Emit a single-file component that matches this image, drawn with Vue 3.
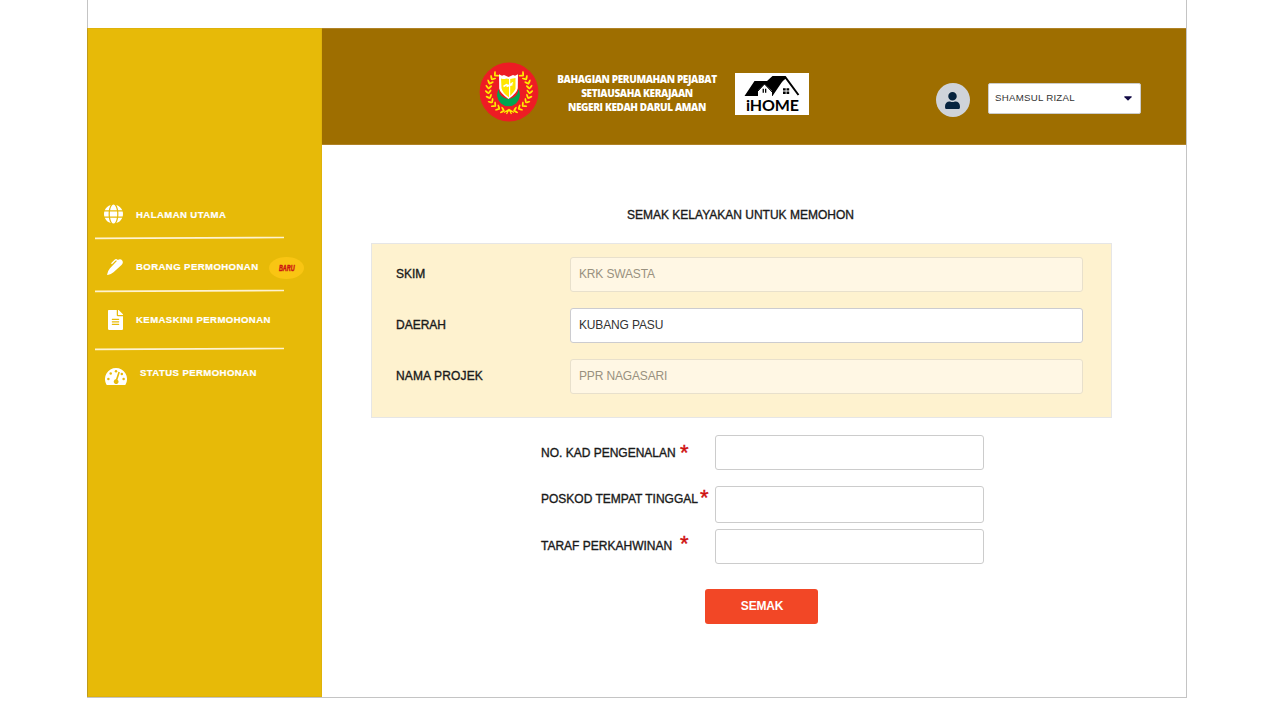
<script setup>
// Laurel leaves grow in pairs along an arc on each side of the state emblem
const leaves = []
for (let i = 0; i < 10; i++) {
  const a = (14 + i * 13.6) * Math.PI / 180
  for (const side of [-1, 1]) {
    const dir = Math.atan2(-Math.sin(a), side * Math.cos(a))
    for (const tilt of [-0.75, 0.75]) {
      leaves.push({
        x: 30 + side * 20.6 * Math.sin(a) + 2 * Math.cos(dir + tilt),
        y: 28.6 + 20.6 * Math.cos(a) + 2 * Math.sin(dir + tilt),
        r: (dir + tilt) * 180 / Math.PI,
      })
    }
  }
}
</script>

<template>
  <div class="page">
    <div class="shell">
      <aside class="sidebar">
        <a class="item i1">
          <svg class="ic-globe" viewBox="0 0 496 512"><path d="M336.5 160C322 70.7 287.8 8 248 8s-74 62.7-88.5 152h177zM152 256c0 22.2 1.2 43.5 3.3 64h185.3c2.1-20.5 3.3-41.8 3.3-64s-1.2-43.5-3.3-64H155.3c-2.1 20.5-3.3 41.8-3.3 64zm324.7-96c-28.6-67.9-86.5-120.4-158-141.6 24.4 33.8 41.2 84.7 50 141.6h108zM177.2 18.4C105.8 39.6 47.8 92.1 19.3 160h108c8.7-56.9 25.5-107.8 49.9-141.6zM487.4 192H372.7c2.1 21 3.3 42.5 3.3 64s-1.2 43-3.3 64h114.6c5.5-20.5 8.6-41.8 8.6-64s-3.1-43.5-8.5-64zM120 256c0-21.5 1.2-43 3.3-64H8.6C3.2 212.5 0 233.8 0 256s3.2 43.5 8.6 64h114.6c-2-21-3.2-42.5-3.2-64zm39.5 96c14.5 89.3 48.7 152 88.5 152s74-62.7 88.5-152h-177zm159.3 141.6c71.4-21.2 129.4-73.7 158-141.6h-108c-8.8 56.9-25.6 107.8-50 141.6zM19.3 352c28.6 67.9 86.5 120.4 158 141.6-24.4-33.8-41.2-84.7-50-141.6h-108z"/></svg>
          <span>HALAMAN UTAMA</span>
        </a>
        <svg class="rule" viewBox="0 0 189 4"><path d="M0 2.4 189 1.5"/></svg>
        <a class="item i2">
          <svg class="ic-pen" viewBox="0 0 16 16">
            <path d="M10.600 1.300Q12.300-.300 14.200.500 16.300 1.800 15.700 4 15.500 5 14.500 6L6.500 13.300Q4 15.500.700 16 .100 16 .200 15.300.800 11.800 3 9.300Z"/>
            <path class="clip" d="M4.500 4.700 8 1.200Q9 .300 10.200 1.300L11.500 2.500"/>
          </svg>
          <span>BORANG PERMOHONAN</span>
          <span class="badge"><b>BARU</b></span>
        </a>
        <svg class="rule" viewBox="0 0 189 4"><path d="M0 2.4 189 1.5"/></svg>
        <a class="item i3">
          <svg class="ic-file" viewBox="0 0 384 512" preserveAspectRatio="none"><path d="M224 136V0H24C10.7 0 0 10.7 0 24v464c0 13.3 10.7 24 24 24h336c13.3 0 24-10.7 24-24V160H248c-13.2 0-24-10.800-24-24zm64 236c0 6.600-5.400 12-12 12H108c-6.600 0-12-5.400-12-12v-8c0-6.600 5.400-12 12-12h168c6.600 0 12 5.400 12 12v8zm0-64c0 6.600-5.400 12-12 12H108c-6.600 0-12-5.400-12-12v-8c0-6.600 5.400-12 12-12h168c6.600 0 12 5.400 12 12v8zm0-72v8c0 6.600-5.400 12-12 12H108c-6.600 0-12-5.400-12-12v-8c0-6.600 5.400-12 12-12h168c6.600 0 12 5.400 12 12zm96-114.100v6.100H256V0h6.100c6.400 0 12.500 2.500 17 7l97.900 98c4.500 4.500 7 10.600 7 16.900z"/></svg>
          <span>KEMASKINI PERMOHONAN</span>
        </a>
        <svg class="rule" viewBox="0 0 189 4"><path d="M0 2.4 189 1.5"/></svg>
        <a class="item i4">
          <svg class="ic-dash" viewBox="0 0 22 17">
            <path d="M11 0A11 11 0 0 1 20.6 16.400Q20.200 17 19.500 17H2.500Q1.800 17 1.400 16.400A11 11 0 0 1 11 0Z"/>
            <g class="cut"><circle cx="3.400" cy="11" r="1.250"/><circle cx="5.700" cy="5.600" r="1.250"/><circle cx="11" cy="3.200" r="1.250"/><circle cx="16.800" cy="6" r="1.250"/><circle cx="18.600" cy="11" r="1.250"/><path d="M13.400 3.800l1.500.5-2.400 7.400a2.400 2.400 0 1 1-1.600-.4z"/></g>
          </svg>
          <span>STATUS PERMOHONAN</span>
        </a>
      </aside>

      <header class="topbar">
        <svg class="emblem" viewBox="0 0 60 60">
          <circle cx="30" cy="30" r="29.4" fill="#ed1c24"/>
          <g fill="#ffec00">
            <ellipse v-for="(l, i) in leaves" :key="i" rx="2.600" ry="0.950" :transform="`translate(${l.x} ${l.y}) rotate(${l.r})`"/>
          </g>
          <path d="M25 50.500 30 47.500l5 3M30 47.500l-2.500 4.500m2.500-4.500 2.500 4.500" fill="none" stroke="#ffec00" stroke-width="1.300"/>
          <path d="M20 26.500A11.400 11.400 0 1 0 39 26.500A9.700 8.500 0 1 1 20 26.500Z" fill="#00a651"/>
          <path d="M20 12.200l3 1.500 2-.7 4.500 2 4.500-2 2 .7 3-1.500-.2 14Q38 31 29.500 37 21 31 20.200 26.500Z" fill="#fff"/>
          <path d="M22 16.500q3.500 1 5 0l3 .5v18.500q-7-5-7.500-9.500z" fill="#ffe600"/>
          <path d="M31.200 17l5.300-1v11q-1.500 3-5.300 7z" fill="#ffe600"/>
          <path d="M24.500 24.500l3-1.800 2 1 4.500-3.200m-6.500 4 6-2" stroke="#fff" stroke-width="1.500" fill="none"/>
        </svg>
        <div class="dept">BAHAGIAN PERUMAHAN PEJABAT<br>SETIAUSAHA KERAJAAN<br>NEGERI KEDAH DARUL AMAN</div>
        <svg class="ihome" viewBox="0 0 74 42">
          <rect width="74" height="42" fill="#fff"/>
          <path d="M9.500 23 19.500 8H32L37.500 3H51L37.500 23Z"/>
          <path d="M33 19 50.500 4.500 63.500 22" fill="none" stroke="#000" stroke-width="2"/>
          <path d="M23 23V17.500L29.500 11l7.500 7v5Z" fill="#fff"/>
          <path d="M22 19l7.500-8 9 9.500" fill="none" stroke="#000" stroke-width="1"/>
          <path d="M27.600 15.700h1.300v4h-1.300zM30 15.700h1.300v4H30zM48 15.200h2.700v2.400H48zM51.500 15.200h2.700v2.400h-2.700zM48 18.500h2.700v2.400H48zM51.500 18.500h2.700v2.400h-2.700z"/>
          <text x="11" y="38.300" textLength="53">iHOME</text>
        </svg>
        <div class="avatar">
          <svg viewBox="0 0 448 512"><path d="M224 256c70.700 0 128-57.300 128-128S294.700 0 224 0 96 57.300 96 128s57.300 128 128 128zm89.600 32h-16.700c-22.200 10.200-46.900 16-72.900 16s-50.600-5.800-72.900-16h-16.700C60.200 288 0 348.200 0 422.400V464c0 26.500 21.500 48 48 48h352c26.500 0 48-21.500 48-48v-41.600c0-74.200-60.200-134.400-134.400-134.400z"/></svg>
        </div>
        <div class="user"><span>SHAMSUL RIZAL</span>
          <svg viewBox="0 0 8 5"><path d="M.5.300h7q.5.300 0 1L4.500 4.200q-.5.400-1 0L.5 1.300Q0 .6.500.300Z"/></svg>
        </div>
      </header>

      <main class="content">
        <h1>SEMAK KELAYAKAN UNTUK MEMOHON</h1>
        <section class="panel">
          <div class="row"><label>SKIM</label><div class="field off">KRK SWASTA</div></div>
          <div class="row"><label>DAERAH</label><div class="field">KUBANG PASU</div></div>
          <div class="row"><label class="wide">NAMA PROJEK</label><div class="field off">PPR NAGASARI</div></div>
        </section>
        <section class="entry">
          <div class="line l1"><label>NO. KAD PENGENALAN</label><i>*</i><div class="box"></div></div>
          <div class="line l2"><label>POSKOD TEMPAT TINGGAL</label><i>*</i><div class="box"></div></div>
          <div class="line l3"><label>TARAF PERKAHWINAN</label><i>*</i><div class="box"></div></div>
        </section>
        <button>SEMAK</button>
      </main>
    </div>
  </div>
</template>

<style>
body { margin: 0; background: #fff; }
</style>

<style scoped>
* { box-sizing: border-box; }
.page { width: 1280px; height: 720px; padding-left: 87px; overflow: hidden; font-family: "Liberation Sans", Arial, sans-serif; }
.shell { width: 1100px; height: 698px; padding-top: 28px; border: 1px solid #c4c4c4; border-top: 0; display: grid; grid-template-columns: 234px 864px; grid-template-rows: 117px 552px; }
.sidebar { grid-row: 1 / 3; margin-left: -1px; width: 235px; height: 669px; background: #e7ba08; border: 1px solid #dfb20a; border-left-color: #bf9a1c; padding: 175px 0 0 7px; display: flex; flex-direction: column; }
.item { display: flex; color: #fff; font-size: 9.6px; font-weight: 700; line-height: 12px; letter-spacing: .4px; white-space: nowrap; -webkit-text-stroke: .2px #fff; }
.item svg { fill: #fff; flex: none; }
.i1 { height: 32px; padding-left: 9px; }
.ic-globe { width: 19px; height: 20px; margin-right: 13px; }
.i1 span { margin-top: 5px; }
.rule { width: 189px; height: 4px; display: block; flex: none; }
.rule path { stroke: #fff3cf; stroke-width: 1.6; }
.i2 { height: 49px; padding-left: 12px; }
.ic-pen { width: 16px; height: 16px; margin: 19px 13px 0 0; }
.clip { fill: none; stroke: #fff; stroke-width: 1.3; }
.i2 span { margin-top: 21px; }
.i2 > span:nth-child(2) { width: 133px; flex: none; }
.i2 .badge { width: 35px; height: 22px; margin-top: 17px; border-radius: 50%; background: #f9c513; display: flex; align-items: center; justify-content: center; color: #cc1712; }
.badge b { font-size: 9.5px; letter-spacing: 0; font-style: italic; transform: scaleX(.57); -webkit-text-stroke: .5px #cc1712; }
.i3 { height: 54px; padding-left: 13px; }
.ic-file { width: 15px; height: 20px; margin: 17px 13px 0 0; }
.i3 span { margin-top: 21px; }
.i4 { padding-left: 10px; }
.ic-dash { width: 22px; height: 17px; margin: 17px 13px 0 0; }
.i4 span { margin-top: 16px; }
.cut, .cut * { fill: #e7ba08; }
.topbar { background: #9e6e00; border-top: 1px solid #b08226; border-bottom: 1px solid #b08226; display: flex; align-items: flex-start; }
.emblem { width: 60px; height: 60px; margin: 33px 0 0 157px; flex: none; }
.dept { width: 170px; margin: 43px 0 0 13px; flex: none; text-align: center; color: #fff; font: 800 10px/14px "Open Sans", sans-serif; white-space: nowrap; letter-spacing: -.38px; }
.ihome { width: 74px; height: 42px; margin: 44px 0 0 13px; flex: none; }
.ihome text { font: 700 16px Lato, sans-serif; }
.avatar { width: 34px; height: 34px; margin: 54px 0 0 127px; border-radius: 50%; background: #cfd3da; flex: none; display: flex; justify-content: center; align-items: center; }
.avatar svg { width: 15px; height: 17px; fill: #06233f; margin-right: 1px; }
.user { width: 153px; height: 31px; margin: 54px 0 0 18px; padding: 0 8px 2px 6px; background: #fff; border: 1px solid #ccc; border-radius: 2px; display: flex; align-items: center; justify-content: space-between; font-size: 9.7px; letter-spacing: .25px; color: #333; }
.user svg { width: 8px; height: 5px; fill: #120a45; margin-top: 2px; }
.content { padding: 63px 0 0 49px; }
h1, label { font-size: 12px; font-weight: 400; color: #1a1a1a; -webkit-text-stroke: .35px #1a1a1a; line-height: 14px; white-space: nowrap; }
h1 { margin: 0 0 21px 256px; }
.panel { width: 741px; height: 175px; background: #fef2cf; border: 1px solid #e6e6e6; padding: 13px 0 0 24px; display: flex; flex-direction: column; gap: 16px; }
.row { display: flex; height: 35px; align-items: center; }
.row label { width: 174px; padding-bottom: 1px; }
.row .wide { letter-spacing: .15px; }
.field { width: 513px; height: 35px; padding: 0 8px 1px; background: #fff; border: 1px solid #ccccd0; border-radius: 3px; font-size: 12px; letter-spacing: -.15px; line-height: 32px; color: #333; }
.off { background: #fff7e4; border-color: #e8e0cc; color: #99917f; }
.entry { margin: 17px 0 0 170px; display: flex; flex-direction: column; }
.line { display: flex; width: 443px; }
.line label { margin-top: 11px; }
.line i { font: 400 22px/22px "Liberation Sans", Arial, sans-serif; color: #cf1010; -webkit-text-stroke: .4px #cf1010; width: 9px; }
.box { width: 269px; height: 35px; border: 1px solid #ccc; border-radius: 3px; background: #fff; margin-left: auto; }
.l1 { height: 51px; }
.l1 label { width: 139px; }
.l1 i { margin-top: 7px; }
.l2 { height: 43px; }
.l2 .box { height: 37px; }
.l2 label { margin-top: 6px; width: 159px; }
.l2 i { margin-top: 1px; }
.l3 { height: 60px; }
.l3 label { margin-top: 10px; width: 139px; }
.l3 i { margin-top: 4px; }
button { display: block; width: 113px; height: 35px; margin-left: 334px; padding: 0 0 1px 1px; border: 0; border-radius: 3px; background: #f24726; color: #fff; font: 700 12px "Liberation Sans", Arial, sans-serif; letter-spacing: -.2px; }
</style>
